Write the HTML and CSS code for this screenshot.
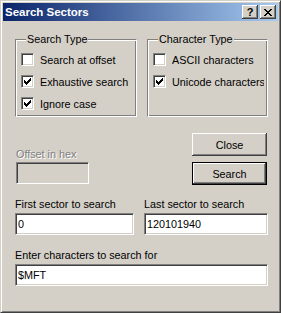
FILE: index.html
```html
<!DOCTYPE html>
<html lang="en">
  <head>
    <meta charset="UTF-8" />
    <title>Search Sectors</title>
    <link rel="stylesheet" href="styles.css">
  </head>
  <body>
    <div class="window">
      <div class="titlebar">
        <span class="title">Search Sectors</span>
        <span class="caption-btn help">?</span>
        <span class="caption-btn">
          <svg width="8" height="7" viewBox="0 0 8 7" shape-rendering="crispEdges">
            <path d="M0 0h2v1H0z M6 0h2v1H6z M1 1h2v1H1z M5 1h2v1H5z M2 2h4v1H2z M3 3h2v1H3z M2 4h4v1H2z M1 5h2v1H1z M5 5h2v1H5z M0 6h2v1H0z M6 6h2v1H6z" fill="#000"/>
          </svg>
        </span>
      </div>

      <div class="client">
        <div class="groups">
          <fieldset class="group group-left">
            <legend>Search Type</legend>
            <label class="check"><span class="box"></span><span>Search at offset</span></label>
            <label class="check"><span class="box checked"></span><span>Exhaustive search</span></label>
            <label class="check"><span class="box checked"></span><span>Ignore case</span></label>
          </fieldset>
          <fieldset class="group group-right">
            <legend>Character Type</legend>
            <label class="check"><span class="box"></span><span>ASCII characters</span></label>
            <label class="check"><span class="box checked"></span><span class="clip">Unicode characters</span></label>
          </fieldset>
        </div>

        <div class="middle">
          <div class="offset">
            <div class="disabled-label">Offset in hex</div>
            <div class="edit disabled"></div>
          </div>
          <div class="buttons">
            <button class="btn">Close</button>
            <button class="btn default">Search</button>
          </div>
        </div>

        <div class="sectors">
          <div class="field">
            <div class="field-label">First sector to search</div>
            <input class="edit first" type="text" value="0" />
          </div>
          <div class="field">
            <div class="field-label">Last sector to search</div>
            <input class="edit last" type="text" value="120101940" />
          </div>
        </div>

        <div class="field chars">
          <div class="field-label">Enter characters to search for</div>
          <input class="edit wide" type="text" value="$MFT" />
        </div>
      </div>
    </div>
  </body>
</html>
```
FILE: styles.css
```css
body {
  margin: 0;
  font-family: "Liberation Sans", Arial, sans-serif;
  font-size: 10.8px;
  color: #000;
}
.window {
  background-color: #d4d0c8;
  border: 1px solid;
  border-color: #d4d0c8 #404040 #404040 #d4d0c8;
  box-shadow: inset 1px 1px #fff, inset -1px -1px #808080;
  box-sizing: border-box;
  display: flex;
  flex-direction: column;
  height: 313px;
  padding: 2px;
  width: 281px;
}
.titlebar {
  align-items: center;
  background: linear-gradient(to right, #0a246a, #a6caf0);
  display: flex;
  height: 18px;
  padding: 0 2px 0 2px;
}
.title {
  color: #fff;
  flex: 1;
  font-size: 11.5px;
  font-weight: bold;
}
.caption-btn {
  align-items: center;
  background-color: #d4d0c8;
  box-shadow: inset -1px -1px #404040, inset 1px 1px #fff, inset -2px -2px #808080;
  box-sizing: border-box;
  display: flex;
  font-weight: bold;
  height: 14px;
  justify-content: center;
  width: 16px;
}
.caption-btn.help {
  font-size: 11px;
  margin-right: 2px;
}
.client {
  display: flex;
  flex: 1;
  flex-direction: column;
  padding: 1px 10px 0 12px;
}
.groups {
  display: flex;
  gap: 10px;
  margin-top: 11px;
}
.group {
  border: 1px solid;
  border-color: #808080 #fff #fff #808080;
  box-shadow: inset 1px 1px #fff, inset -1px -1px #808080;
  box-sizing: border-box;
  height: 84px;
  margin: 0;
  padding: 7px 0 0 5px;
}
.group-left {
  width: 122px;
}
.group-right {
  width: 121px;
}
.group legend {
  background-color: #d4d0c8;
  line-height: 13px;
  margin-left: 5px;
  padding: 0 1px;
}
.check {
  align-items: center;
  display: flex;
  gap: 6px;
  height: 13px;
  margin-bottom: 9px;
  white-space: nowrap;
}
.box {
  background-color: #fff;
  border: 1px solid;
  border-color: #808080 #fff #fff #808080;
  box-shadow: inset 1px 1px #404040, inset -1px -1px #d4d0c8;
  box-sizing: border-box;
  flex: none;
  height: 13px;
  width: 13px;
}
.box.checked {
  background: #fff url("data:image/svg+xml,%3Csvg xmlns='http://www.w3.org/2000/svg' width='7' height='7' shape-rendering='crispEdges'%3E%3Cpath d='M0 2h1v3H0z M1 3h1v3H1z M2 4h1v3H2z M3 3h1v3H3z M4 2h1v3H4z M5 1h1v3H5z M6 0h1v3H6z'/%3E%3C/svg%3E") no-repeat 2px 2px;
}
.clip {
  overflow: hidden;
  width: 92px;
}
.middle {
  align-items: flex-end;
  display: flex;
  justify-content: space-between;
  margin-top: 16px;
}
.offset {
  margin: 0 0 1px 1px;
}
.disabled-label {
  color: #808080;
  line-height: 13px;
  margin-bottom: 1px;
  text-shadow: 1px 1px #fff;
}
.edit {
  background-color: #fff;
  border: 1px solid;
  border-color: #808080 #fff #fff #808080;
  box-shadow: inset 1px 1px #404040, inset -1px -1px #d4d0c8;
  box-sizing: border-box;
  font-family: inherit;
  font-size: 10.8px;
  height: 22px;
  margin: 0;
  outline: none;
  padding: 0 2px;
}
.edit.disabled {
  background-color: #d4d0c8;
  width: 73px;
}
.buttons {
  display: flex;
  flex-direction: column;
  gap: 6px;
  margin-right: 1px;
}
.btn {
  background-color: #d4d0c8;
  border: none;
  box-shadow: inset -1px -1px #404040, inset 1px 1px #fff, inset -2px -2px #808080;
  box-sizing: border-box;
  font-family: inherit;
  font-size: 10.8px;
  height: 23px;
  padding: 0;
  width: 75px;
}
.btn.default {
  border: 1px solid #000;
}
.sectors {
  display: flex;
  gap: 10px;
  margin-top: 13px;
}
.field-label {
  line-height: 13px;
  margin-bottom: 2px;
}
.edit.first {
  width: 119px;
}
.edit.last {
  width: 124px;
}
.chars {
  margin-top: 14px;
}
.edit.wide {
  width: 253px;
}
```
